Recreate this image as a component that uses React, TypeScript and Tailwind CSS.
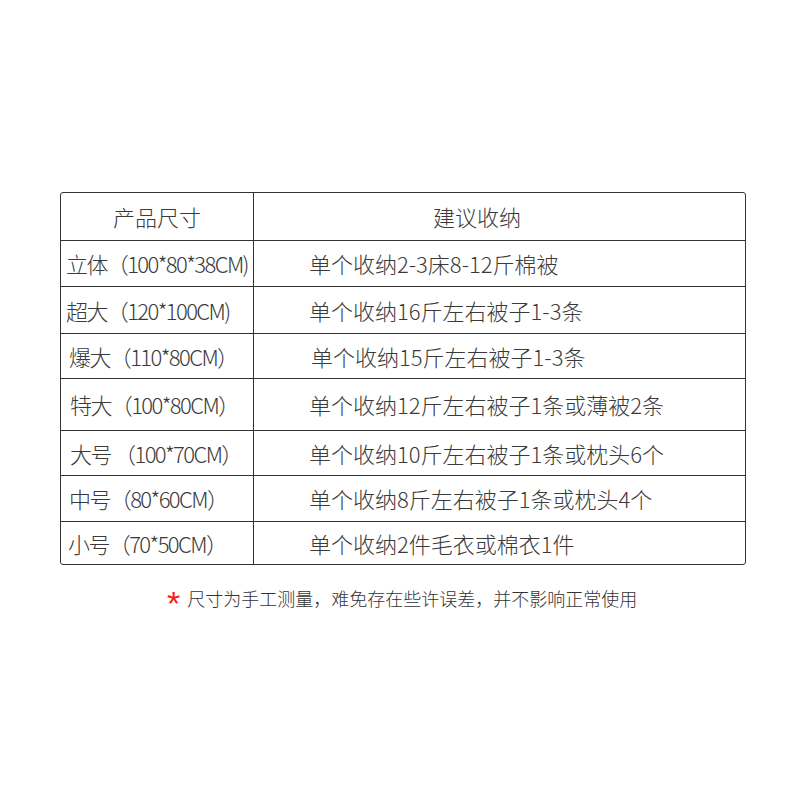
import React from 'react';

const rows = [
  { size: '立体（100*80*38CM)', pl: 'pl-[5px]', pr: 'pl-[55px]', h: 'h-[46px]', tip: '单个收纳2-3床8-12斤棉被' },
  { size: '超大（120*100CM)', pl: 'pl-[5px]', pr: 'pl-[55px]', h: 'h-[47px]', tip: '单个收纳16斤左右被子1-3条' },
  { size: '爆大（110*80CM）', pl: 'pl-[8px]', pr: 'pl-[57px]', h: 'h-[45px]', tip: '单个收纳15斤左右被子1-3条' },
  { size: '特大（100*80CM）', pl: 'pl-[9px]', pr: 'pl-[55px]', h: 'h-[52px]', tip: '单个收纳12斤左右被子1条或薄被2条' },
  { size: '大号 （100*70CM）', pl: 'pl-[9px]', pr: 'pl-[55px]', h: 'h-[45px]', tip: '单个收纳10斤左右被子1条或枕头6个' },
  { size: '中号（80*60CM）', pl: 'pl-[8px]', pr: 'pl-[55px]', h: 'h-[46px]', tip: '单个收纳8斤左右被子1条或枕头4个' },
  { size: '小号（70*50CM）', pl: 'pl-[7px]', pr: 'pl-[55px]', h: 'h-[42px]', tip: '单个收纳2件毛衣或棉衣1件' },
];

export default function App() {
  return (
    <div className="w-[790px] h-[790px] bg-white text-[#3a3a3a] font-light font-['Noto_Sans_CJK_SC',sans-serif] pt-[192px] pl-[60px]">
      {/* 尺寸表 */}
      <div className="w-[686px] border border-[#333] rounded-[3px] overflow-hidden">
        <div className="grid grid-cols-[193px_1fr] h-[48px] border-b border-[#333] text-[22px]">
          <div className="flex items-center justify-center border-r border-[#333]">产品尺寸</div>
          <div className="flex items-center pl-[179px]">建议收纳</div>
        </div>
        {rows.map((r, i) => (
          <div
            key={r.size}
            className={`grid grid-cols-[193px_1fr] ${r.h} ${i < rows.length - 1 ? 'border-b border-[#333]' : ''}`}
          >
            <div className={`flex items-center whitespace-nowrap overflow-hidden border-r border-[#333] text-[22px] tracking-[-1.6px] ${r.pl}`}>{r.size}</div>
            <div className={`flex items-center whitespace-nowrap text-[22px] ${r.pr}`}>{r.tip}</div>
          </div>
        ))}
      </div>

      {/* 备注 */}
      <div className="flex items-center mt-[11px] pl-[107px] text-[18px] text-[#333]">
        <span className="text-[#ff1a1a] text-[34px] font-normal leading-none font-['Liberation_Sans',sans-serif] mr-[7px] mt-[10px]">*</span>
        <span>尺寸为手工测量，难免存在些许误差，并不影响正常使用</span>
      </div>
    </div>
  );
}
